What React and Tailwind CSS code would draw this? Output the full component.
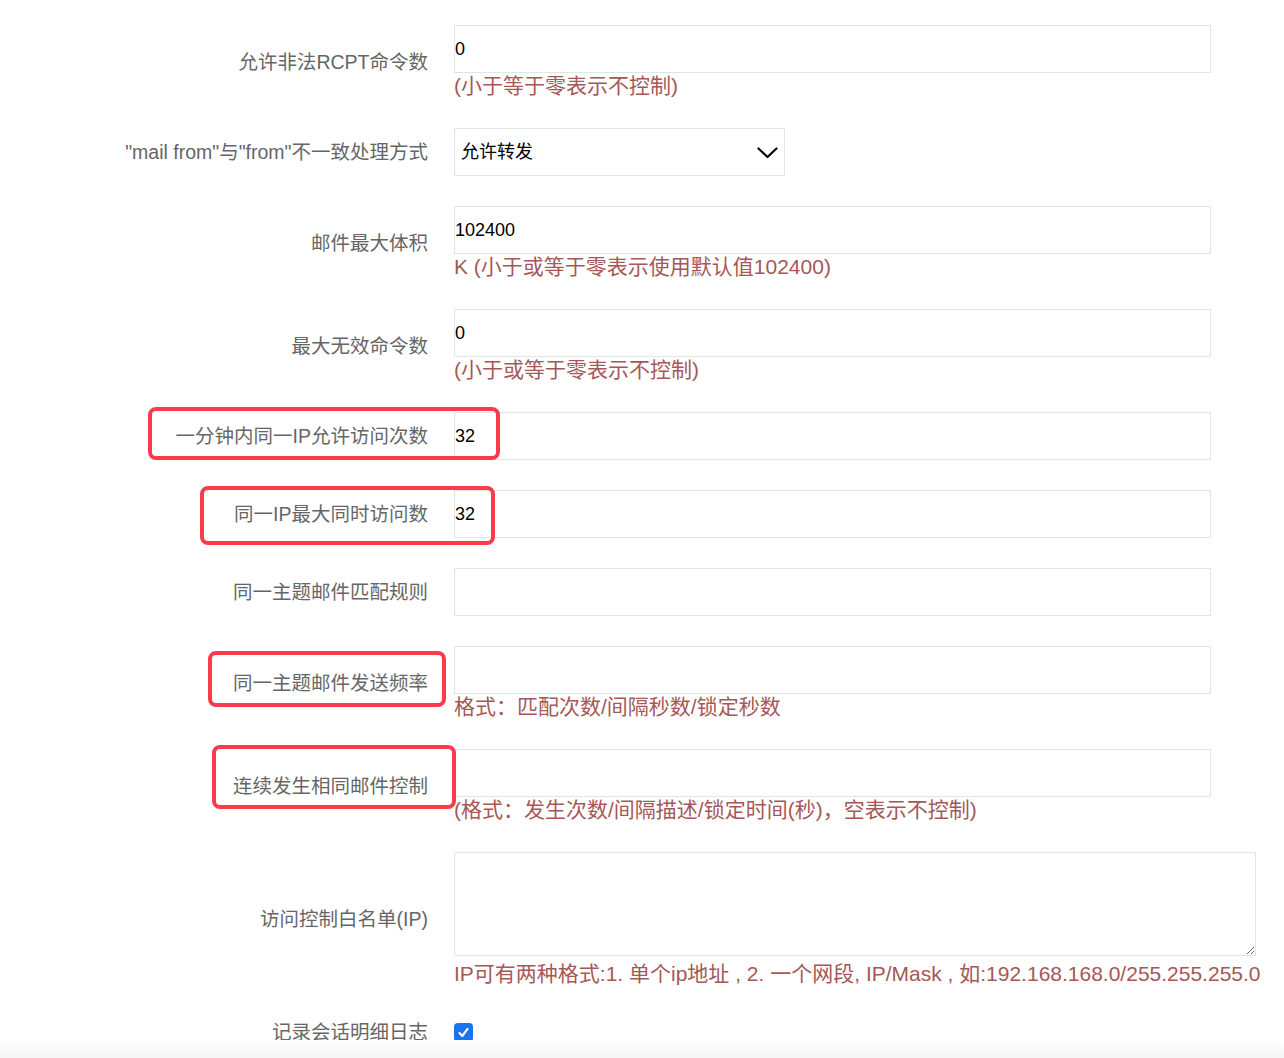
import React from "react";

const FONT = { fontFamily: '"Liberation Sans", "Noto Sans CJK SC", sans-serif' };

function Row({ label, children, hint, extra = "" }) {
  return (
    <div className={`grid grid-cols-[428px_1fr] gap-x-[26px] items-center py-[15px] ${extra}`}>
      <div className="text-right text-[19.5px] leading-[28px] text-[#666666]">{label}</div>
      <div className="flex flex-col">
        {children}
        {hint && (
          <div className="text-[21px] leading-[25px] text-[#a65757] whitespace-nowrap">{hint}</div>
        )}
      </div>
    </div>
  );
}

function TextInput({ value = "" }) {
  return (
    <input
      type="text"
      defaultValue={value}
      className="h-[48px] w-[757px] border border-[#dfe6e6] bg-white px-0 text-[18px] text-black outline-none"
      style={FONT}
    />
  );
}

function Box({ className }) {
  return (
    <div
      className={`absolute rounded-[8px] border-[4px] border-[#fb3a4c] pointer-events-none ${className}`}
    />
  );
}

export default function App() {
  return (
    <div className="relative min-h-[1058px] bg-white pt-[10px]" style={FONT}>
      <Row label="允许非法RCPT命令数" hint="(小于等于零表示不控制)">
        <TextInput value="0" />
      </Row>
      <Row label={'"mail from"与"from"不一致处理方式'}>
        <div className="relative h-[48px] w-[331px] border border-[#dfe6e6] bg-white">
          <div className="pl-[6px] text-[18px] leading-[46px] text-black">允许转发</div>
          <svg
            className="absolute left-[302px] top-[18px]"
            width="21"
            height="12"
            viewBox="0 0 21 12"
            fill="none"
          >
            <path d="M1.5 1.5 L10.5 10 L19.5 1.5" stroke="#000" strokeWidth="2.2" strokeLinecap="round" strokeLinejoin="round" />
          </svg>
        </div>
      </Row>
      <Row label="邮件最大体积" hint="K (小于或等于零表示使用默认值102400)">
        <TextInput value="102400" />
      </Row>
      <Row label="最大无效命令数" hint="(小于或等于零表示不控制)">
        <TextInput value="0" />
      </Row>
      <Row label="一分钟内同一IP允许访问次数">
        <TextInput value="32" />
      </Row>
      <Row label="同一IP最大同时访问数">
        <TextInput value="32" />
      </Row>
      <Row label="同一主题邮件匹配规则">
        <TextInput value="" />
      </Row>
      <Row label="同一主题邮件发送频率" hint="格式：匹配次数/间隔秒数/锁定秒数">
        <TextInput value="" />
      </Row>
      <Row label="连续发生相同邮件控制" hint="(格式：发生次数/间隔描述/锁定时间(秒)，空表示不控制)">
        <TextInput value="" />
      </Row>
      <Row
        label="访问控制白名单(IP)"
        hint="IP可有两种格式:1. 单个ip地址 , 2. 一个网段, IP/Mask , 如:192.168.168.0/255.255.255.0"
      >
        <div className="h-[109px]">
          <textarea
            className="block h-[104px] w-[802px] border border-[#dfe6e6] bg-white outline-none resize"
          />
        </div>
      </Row>
      <Row label="记录会话明细日志">
        <div className="flex h-[32px] items-center">
          <span className="flex h-[19px] w-[19px] items-center justify-center rounded-[4px] bg-[#1a74f0]">
            <svg width="13" height="13" viewBox="0 0 13 13" fill="none">
              <path d="M2.5 7 L5.3 10 L10.5 2.8" stroke="#fff" strokeWidth="2.2" strokeLinecap="round" strokeLinejoin="round" />
            </svg>
          </span>
        </div>
      </Row>

      <Box className="left-[148px] top-[407px] w-[352px] h-[53px]" />
      <Box className="left-[200px] top-[486px] w-[295px] h-[59px]" />
      <Box className="left-[208px] top-[651px] w-[238px] h-[56px]" />
      <Box className="left-[212px] top-[745px] w-[244px] h-[64px]" />

      <div className="pointer-events-none fixed bottom-0 left-0 right-0 h-[18px] bg-gradient-to-b from-white to-[#f6f6f6]" />
    </div>
  );
}
